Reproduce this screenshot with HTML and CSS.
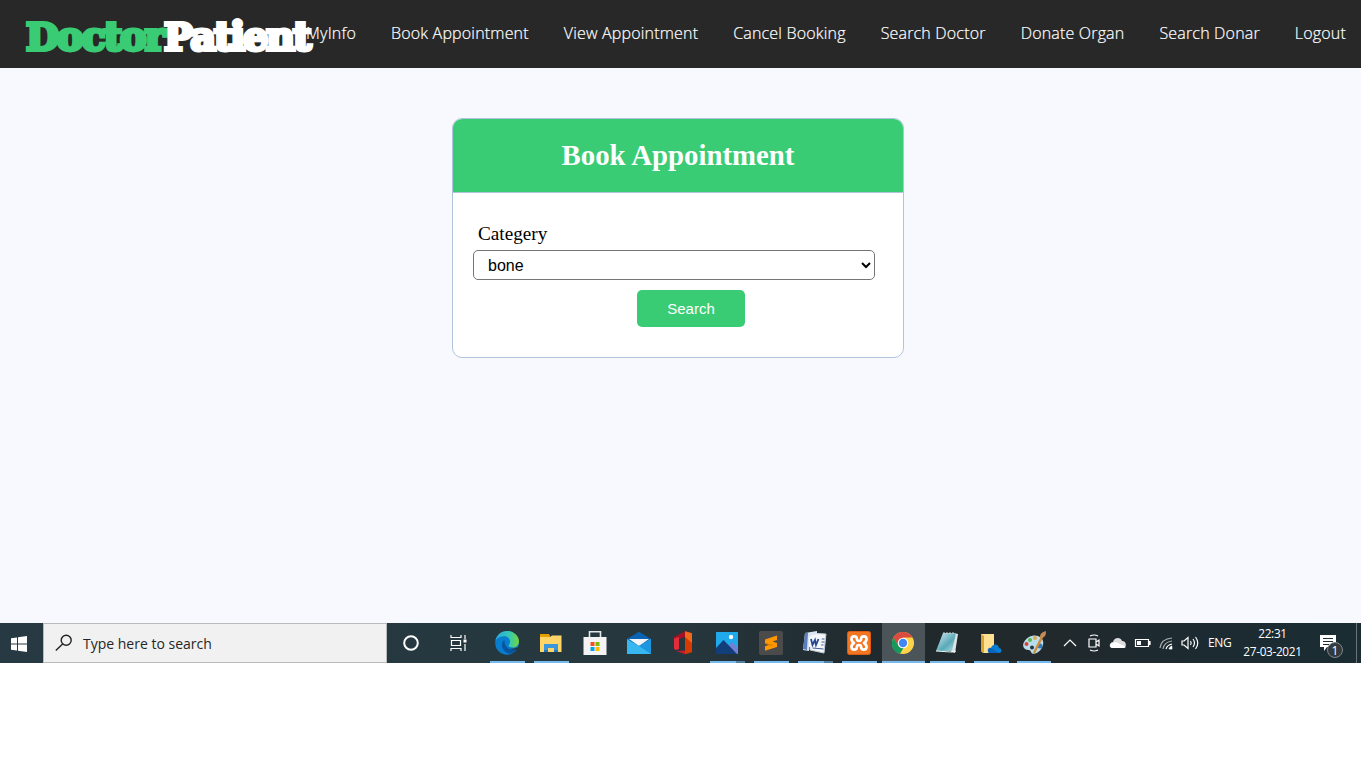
FILE: index.html
```html
<!DOCTYPE html>
<html lang="en">
<head>
<meta charset="utf-8">
<title>Book Appointment</title>
<link rel="stylesheet" href="styles.css">
</head>
<body>
<div class="screen">
  <header class="topbar">
    <div class="logo"><span class="logo-green">Doctor</span><span class="logo-white">Patient</span></div>
    <nav class="nav">
      <a>MyInfo</a><a>Book Appointment</a><a>View Appointment</a><a>Cancel Booking</a><a>Search Doctor</a><a>Donate Organ</a><a>Search Donar</a><a>Logout</a>
    </nav>
  </header>
  <main class="content">
    <section class="card">
      <h2 class="card-title">Book Appointment</h2>
      <form class="card-body">
        <label class="label">Categery</label>
        <select class="select"><option>bone</option></select>
        <button class="button" type="button">Search</button>
      </form>
    </section>
  </main>
  <footer class="taskbar">
    <div class="start"><svg width="16" height="16" viewBox="0 0 16 16" fill="#fff"><path d="M0 2.2 6 1.4V7.4H0zM7 1.2 16 0V7.4H7zM0 8.4H6V14.5L0 13.7zM7 8.4H16V16L7 14.7z"/></svg></div>
    <div class="search"><svg width="18" height="18" viewBox="0 0 18 18" fill="none" stroke="#222" stroke-width="1.4"><circle cx="11.2" cy="6.3" r="5"/><path d="M7.6 9.9.8 16.6"/></svg><span>Type here to search</span></div>
    <div class="apps">
      <div class="app wide"><svg width="24" height="24" viewBox="0 0 24 24"><circle cx="12" cy="12" r="6.8" fill="none" stroke="#fff" stroke-width="2"/></svg></div>
      <div class="app wide"><svg width="24" height="24" viewBox="0 0 24 24" fill="none" stroke="#fff" stroke-width="1.2"><path d="M4 4V6.5H14V4M4 20V17.5H14V20M4.5 9.5H13.5V14.5H4.5zM18 4V8M18 13V20"/><path fill="#fff" stroke="none" d="M16.5 8.5h3v3h-3z"/></svg></div>
      <div class="app open edge"><svg width="24" height="24" viewBox="0 0 24 24"><defs><linearGradient id="eg" x1="0" x2="1"><stop stop-color="#2ba8e0"/><stop offset=".6" stop-color="#35c9b2"/><stop offset="1" stop-color="#74d53a"/></linearGradient></defs><circle cx="12" cy="12" r="11.8" fill="#087ccd"/><path fill="url(#eg)" d="M.3 10C1.5 4 6 0 12 0c7 0 12 5 12 10.500C24 14 21.500 16.500 18 16.500c-3 0-4.500-1-4.500-2s1.600-1.400 1.500-4C14.900 6.500 11 4.500 7 5.500 3.500 6.300 1.300 8 .3 10z"/><path fill="#0755a0" d="M9.500 9C6.500 11 6 16 9 19.500c2 2.500 5 3.500 7.500 3.100 3-1 5-3 6-5C18 20 9 18.500 9.500 9z"/><path fill="#26363d" d="M12.500 14c0 3.500 4 4.500 7.500 3.300l3-1c.5-.3 1.100.5.600 1.100-2 1.500-5.500 2-8 .6-2.500-1.300-3.100-2.500-3.100-4z"/></svg></div>
      <div class="app open"><svg width="24" height="24" viewBox="0 0 24 24"><path fill="#e5a000" d="M1 3h9l1 2v4H1z"/><path fill="#ffd568" d="M1 6h10l2-1.500h9.500V21H1z"/><path fill="#3b97dc" d="M5 13h14v8h-4v-4H9v4H5z"/><path fill="#1d76bd" d="M5 19h4v2H5zm10 0h4v2h-4z"/></svg></div>
      <div class="app"><svg width="24" height="24" viewBox="0 0 24 24"><path d="M6.500 7V.8h11V7" fill="none" stroke="#e5e8e9" stroke-width="1.6"/><path fill="#f4f4f4" d="M.5 6h23v18H.5z"/><path fill="#f25022" d="M7.500 11h4v4h-4z"/><path fill="#7fba00" d="M12.500 11h4v4h-4z"/><path fill="#00a4ef" d="M7.500 16h4v4h-4z"/><path fill="#ffb900" d="M12.500 16h4v4h-4z"/></svg></div>
      <div class="app"><svg width="24" height="24" viewBox="0 0 24 24"><path fill="#0a63b5" d="M0 8 12 .7 24 8v8H0z"/><path fill="#f2f4f5" d="M2 8h20l-10 7z"/><path fill="#36b7ef" d="m0 8 12 7 12-7v15H0z"/><path fill="#1b96df" d="m12 15 12-7v15z"/></svg></div>
      <div class="app"><svg width="24" height="24" viewBox="0 0 24 24"><path fill="#d83b01" d="m14 .3 7 2v19l-7 2z"/><path fill="#f06a18" d="m14 .3 7 2V12l-7-6z"/><path fill="#a70f22" d="m3 6 11-5.700V6L8 8v10l-3 1-2-2z"/><path fill="#e32c3b" d="M3 7.500 8 6v12l-3 1-2-1z"/><path fill="#c51b2a" d="m5 20 9-.5v3.800z"/></svg></div>
      <div class="app open multi"><svg width="24" height="24" viewBox="0 0 24 24"><path fill="#20a9eb" d="M1 1h22v22H1z"/><path fill="#7181d4" d="m11 17 6-6 6 6v6H11z"/><path fill="#123e79" d="M1 17 8.500 9 22 23H1z"/><circle cx="16" cy="6" r="2.200" fill="#fff"/></svg></div>
      <div class="app open"><svg width="24" height="24" viewBox="0 0 24 24"><rect width="24" height="24" rx="2" fill="#4b4b4b"/><path fill="#ff9800" d="m6 8.400 12-3.800v4.500l-4.500 1.400 4.500 1.600V16L6 19.700v-4.500l4.500-1.400L6 12.300z"/><path d="m6 12.300 4.500 1.500 3 .2" stroke="#d77500" fill="none"/></svg></div>
      <div class="app open multi"><svg width="24" height="24" viewBox="0 0 24 24"><path fill="#f4f6f8" stroke="#bfc9d2" d="m7 2 16 1-2 19-14-3z"/><path d="M18 8h3.500m-4 3h4m-5 3h4m-11 3 11 1" stroke="#425f9d"/><path fill="#dce6f2" d="m2 2 12-2v3L6 5v15l-6-1z"/><path fill="#5a7eb9" d="m2 2 3-.500L4 19l-4-1z"/><path fill="#f4f6fa" d="m6 5 13 1-1 10H6z"/><path d="m8 8 1.500 6 2.500-5 1 5 2.500-6" fill="none" stroke="#23488f" stroke-width="1.800"/></svg></div>
      <div class="app open xampp"><svg width="24" height="24" viewBox="0 0 24 24"><rect x=".5" y=".5" width="23" height="23" rx="2" fill="#f37623" stroke="#df5b11"/><path fill="none" stroke="#fff" stroke-width="2.700" stroke-linejoin="round" d="M7 12Q4.500 10.500 4.500 8a2.700 2.700 0 0 1 5.400 0Q10 10 12 10t2.100-2a2.700 2.700 0 0 1 5.400 0q0 2.500-2.500 4 2.500 1.500 2.500 4a2.700 2.700 0 0 1-5.400 0Q14 14 12 14t-2.100 2a2.700 2.700 0 0 1-5.400 0Q4.500 13.500 7 12z"/></svg></div>
      <div class="app open active"><svg width="24" height="24" viewBox="0 0 24 24"><circle cx="12" cy="12" r="11" fill="#ffd349"/><path fill="#dc4b3f" d="M2.500 6.500C6-1 18-1 21.500 6.500H12v7L7 15z"/><path fill="#149b5b" d="M2.500 6.500 7.500 15l5 2-3.500 5.700C1.500 21-1 13 2.500 6.500z"/><circle cx="12" cy="12" r="5.300" fill="#fff"/><circle cx="12" cy="12" r="4.200" fill="#4285f4"/></svg></div>
      <div class="app open"><svg width="24" height="24" viewBox="0 0 24 24"><defs><linearGradient id="np" x1="0" y1="0" x2="1" y2="1"><stop stop-color="#d3edf1"/><stop offset=".6" stop-color="#5aa9b7"/><stop offset="1" stop-color="#b2e1e5"/></linearGradient></defs><path fill="#dce5e6" d="m19 2 4 1-3 19-4-1z"/><path fill="url(#np)" d="M8 2h13l-4 18H1z"/><path d="M9 1v2m3-2v2m3-2v2m3-2v2" stroke="#c7cfca"/><path d="m1 20 15 1 5-1" stroke="#edf7f5" fill="none"/></svg></div>
      <div class="app open"><svg width="24" height="24" viewBox="0 0 24 24"><path fill="#ffe092" d="M2 3h13v19H4l-2-2z"/><path fill="#d9a52e" d="m2 3 3 2v17l-3-2z"/><path fill="#087dd5" d="M10 22c-3-3 0-6 2-5 1-4 7-5 8 0 3 0 3.500 5 0 5z"/><path fill="#0865bc" d="m12 17 8 5H10c-2-2-1-5 2-5z"/></svg></div>
      <div class="app open paint"><svg width="24" height="24" viewBox="0 0 24 24"><path fill="#badded" d="M7 6c7-4 16 0 14 8-2 8-11 11-12 7-1-3-3-1-6-3-4-3-1-9 4-12z"/><circle cx="10" cy="16.500" r="2" fill="#26383f"/><circle cx="4.500" cy="13" r="2" fill="#d8433a"/><circle cx="8" cy="9" r="2" fill="#5eb54c"/><circle cx="13" cy="7" r="2" fill="#e6a84b"/><circle cx="18" cy="15" r="2.500" fill="#317ac0"/><path d="M12 22 20 6" stroke="#d18c36" stroke-width="2.400"/><path fill="#c78a53" d="M18 6c0-4 3-5 6-6 0 4-1 6-4 7z"/></svg></div>
    </div>
    <div class="tray">
      <svg viewBox="0 0 24 24"><path d="m6 15 6-6 6 6"/></svg>
      <svg viewBox="0 0 24 24"><path d="M8 5q4-2 8 0M8 19q4 2 8 0M7 8h7v8H7zM14 11l3-2v6l-3-2z"/></svg>
      <svg viewBox="0 0 24 24"><path fill="#ddd" stroke="none" d="M6 17c-4-1-2-6 1-6 1-5 8-5 9-1 5 0 5 7 1 7z"/><path fill="#fff" stroke="none" d="M6 17c-3-1-2-5 1-5l3-1 10 5-2 1z"/></svg>
      <svg viewBox="0 0 24 24"><path d="M5.500 8.500h13v7h-13zM19 10.500h1v3h-1z"/><path fill="#fff" stroke="none" d="M7 10h4v4H7z"/></svg>
      <svg viewBox="0 0 24 24"><path stroke="#aab0b2" d="M6 17Q7 8 18 7M9 18q1-7 9-8"/><path d="M12 18q1-4 6-5M15 18l3-3"/><circle cx="17" cy="17" r="1.500" fill="#fff" stroke="none"/></svg>
      <svg viewBox="0 0 24 24"><path d="M4 10h2l4-3.500v11L6 14H4zM12.500 10q1.500 2 0 4M15 8q3 4 0 8M17.500 6q4.500 6 0 12"/></svg>
    </div>
    <div class="lang">ENG</div>
    <div class="clock"><span>22:31</span><span>27-03-2021</span></div>
    <div class="notice"><svg width="26" height="28" viewBox="0 0 26 28"><path fill="#fff" d="M1 5h16v12H8l-3 4v-4H1z"/><path d="M4 8.500h10m-10 3h10m-10 3h6" stroke="#1e2b31"/><circle cx="16" cy="20" r="7.500" fill="#333a3d" stroke="#7f888b"/><text class="badge" x="16" y="24.500" text-anchor="middle">1</text></svg></div>
  </footer>
</div>
</body>
</html>
```
FILE: styles.css
```css
* { box-sizing: border-box; }
body { margin: 0; background: #fff; overflow: hidden; }
.screen { width: 1361px; height: 663px; display: flex; flex-direction: column; background: #f8f9ff; }
.topbar { height: 68px; flex: none; background: #282828; display: flex; align-items: center; justify-content: space-between; padding: 0 15px 0 26px; }
.logo { width: 270px; flex: none; display: flex; z-index: 1; font: bold 40px/68px "DejaVu Serif", serif; letter-spacing: -2.100px; padding-top: 5px; margin-bottom: 1px; white-space: nowrap; }
.logo span::first-letter { font-size: 38px; }
.logo-green { color: #3acc75; width: 138px; flex: none; -webkit-text-stroke: 3.800px #3acc75; }
.logo-white { color: #fff; -webkit-text-stroke: 3.800px #fff; letter-spacing: -2.300px; }
.nav { display: flex; gap: 35px; font: 300 16px/66px "Open Sans", sans-serif; color: #fff; white-space: nowrap; letter-spacing: .18px; padding-bottom: 2px; -webkit-text-stroke: .2px #fff; }
.content { flex: 1; padding: 50px 0 0 452px; }
.card { width: 452px; height: 240px; border: 1px solid #b0c4de; border-radius: 10px; overflow: hidden; background: #fff; }
.card-title { margin: 0; height: 74px; border-bottom: 1px solid #b0c4de; background: #3acc75; color: #fff; text-align: center; font: bold 28.800px/73px "Liberation Serif", serif; }
.card-body { display: flex; flex-direction: column; padding: 30px 20px 0; }
.label { padding-left: 5px; font: 19.200px/22px "Liberation Serif", serif; color: #000; }
.select { width: 402px; height: 30px; margin-top: 5px; padding: 0 10px; border: 1px solid #767676; border-radius: 5px; background: #fff; color: #000; font: 16px "Liberation Sans", sans-serif; }
.button { width: 108px; height: 37px; margin: 10px 0 0 164px; border: 0; border-radius: 5px; background: #3acc75; color: #fff; font: 15px "Liberation Sans", sans-serif; }
.taskbar { height: 40px; flex: none; display: flex; background: linear-gradient(90deg, #273a43 0, #26373d 50%, #20292d 65%, #22292c 76%, #1c2b31 88%, #1b2c33 100%); color: #fff; font-family: "Noto Sans", sans-serif; }
.start { width: 43px; padding: 12px 0 0 11px; }
.search { width: 344px; border: 1px solid #bababa; background: #f1f1f1; display: flex; align-items: center; padding-left: 11px; gap: 10px; color: #262626; font: 14px "Open Sans", sans-serif; }
.apps { display: flex; width: 671px; }
.app { width: 44px; flex: none; display: flex; justify-content: center; padding-top: 8px; background-repeat: no-repeat; }
.wide { width: 48px; }
.edge { margin-left: 2px; }
.open { background-image: linear-gradient(#76b9ed, #76b9ed); background-size: 35px 2px; background-position: 5px 38px; }
.multi { background-image: linear-gradient(90deg, #76b9ed 26px, #557f9f 26px); }
.xampp { width: 45px; padding-right: 1px; }
.active { width: 43px; padding-right: 1px; background-color: #4b5459; background-size: 43px 2px; background-position: 0 38px; }
.paint { padding-right: 3px; background-size: 34px 2px; background-position: 4px 38px; }
.tray { display: flex; align-items: center; width: 146px; }
.tray svg { width: 24px; height: 24px; fill: none; stroke: #fff; stroke-width: 1.200; }
.lang { width: 31px; padding-left: 4px; font: 12px/40px "Open Sans", sans-serif; letter-spacing: -.3px; }
.clock { width: 75px; display: flex; flex-direction: column; align-items: center; padding-top: 1px; font: 11.800px/18px "Open Sans", sans-serif; letter-spacing: -.33px; }
.notice { margin-left: 9px; width: 38px; padding-top: 7px; border-right: 1px solid #69757a; }
.badge { font: 12px "Open Sans", sans-serif; fill: #fff; }
```
